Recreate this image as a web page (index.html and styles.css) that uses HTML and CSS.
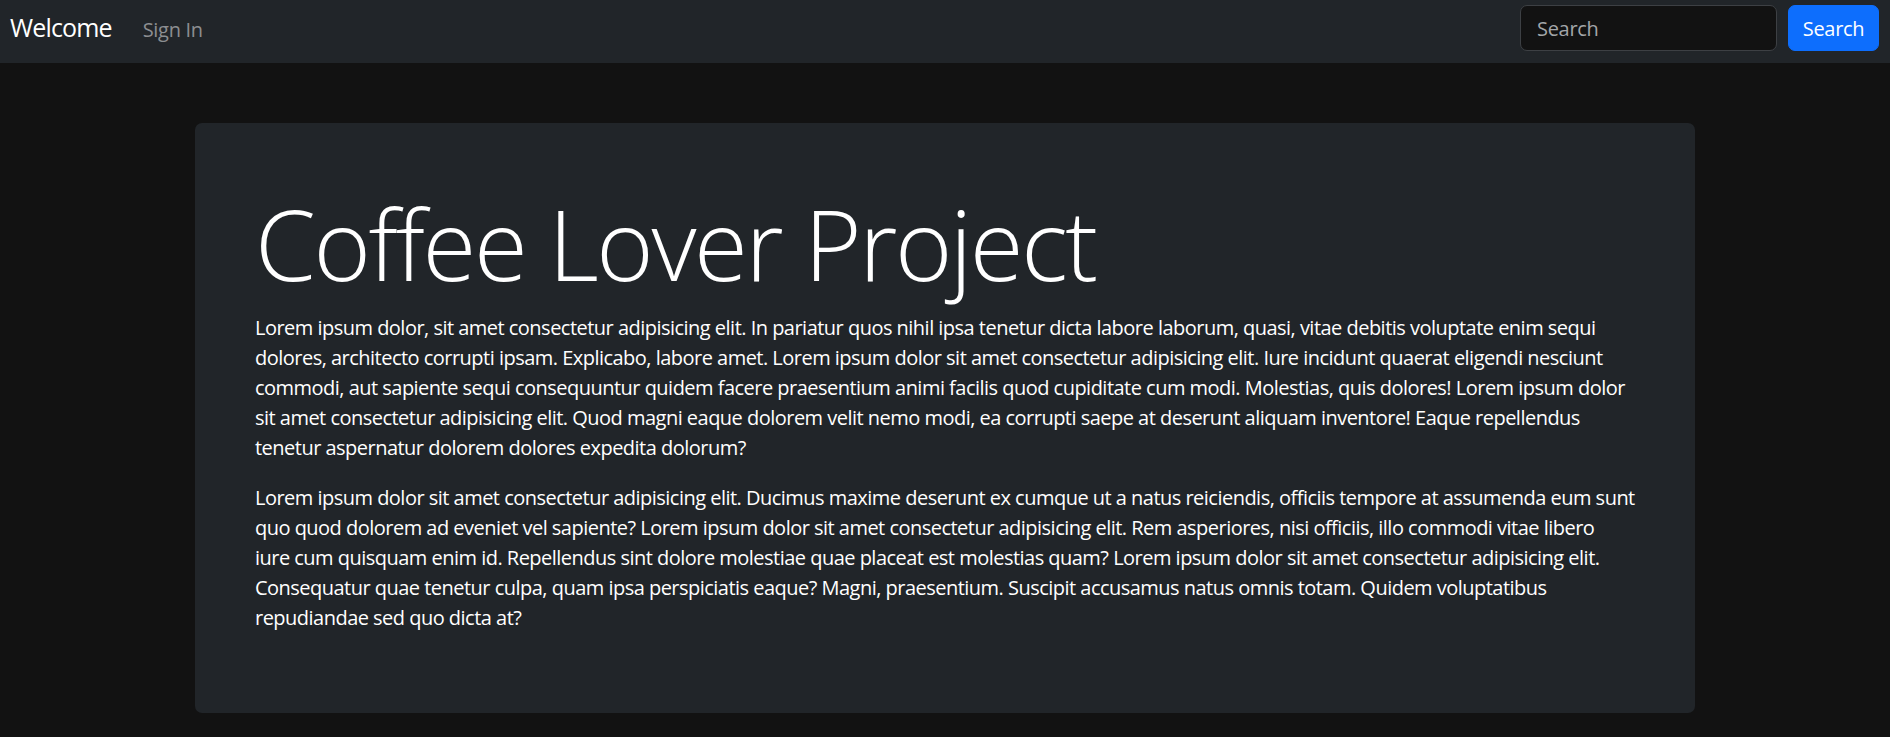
FILE: index.html
```html
<!DOCTYPE html>
<html lang="en">
<head>
<meta charset="utf-8">
<title>Coffee Lover Project</title>
<link rel="stylesheet" href="styles.css">
</head>
<body>
<nav class="navbar">
  <div class="nav-left">
    <a class="brand" href="#">Welcome</a>
    <a class="nav-link" href="#">Sign In</a>
  </div>
  <form class="search" onsubmit="return false">
    <input class="search-input" type="search" placeholder="Search">
    <button class="search-btn" type="submit">Search</button>
  </form>
</nav>
<main class="page">
  <section class="jumbo">
    <h1 class="display">Coffee Lover Project</h1>
    <p class="copy">Lorem ipsum dolor, sit amet consectetur adipisicing elit. In pariatur quos nihil ipsa tenetur dicta labore laborum, quasi, vitae debitis voluptate enim sequi<br>
    dolores, architecto corrupti ipsam. Explicabo, labore amet. Lorem ipsum dolor sit amet consectetur adipisicing elit. Iure incidunt quaerat eligendi nesciunt<br>
    commodi, aut sapiente sequi consequuntur quidem facere praesentium animi facilis quod cupiditate cum modi. Molestias, quis dolores! Lorem ipsum dolor<br>
    sit amet consectetur adipisicing elit. Quod magni eaque dolorem velit nemo modi, ea corrupti saepe at deserunt aliquam inventore! Eaque repellendus<br>
    tenetur aspernatur dolorem dolores expedita dolorum?</p>
    <p class="copy">Lorem ipsum dolor sit amet consectetur adipisicing elit. Ducimus maxime deserunt ex cumque ut a natus reiciendis, officiis tempore at assumenda eum sunt<br>
    quo quod dolorem ad eveniet vel sapiente? Lorem ipsum dolor sit amet consectetur adipisicing elit. Rem asperiores, nisi officiis, illo commodi vitae libero<br>
    iure cum quisquam enim id. Repellendus sint dolore molestiae quae placeat est molestias quam? Lorem ipsum dolor sit amet consectetur adipisicing elit.<br>
    Consequatur quae tenetur culpa, quam ipsa perspiciatis eaque? Magni, praesentium. Suscipit accusamus natus omnis totam. Quidem voluptatibus<br>
    repudiandae sed quo dicta at?</p>
  </section>
</main>
</body>
</html>
```
FILE: styles.css
```css
* { box-sizing: border-box; }

html, body {
  margin: 0;
  background: #121212;
  color: #ffffff;
  font-family: "Open Sans", "Noto Sans", sans-serif;
}

.navbar {
  height: 63px;
  background: #212529;
  display: flex;
  justify-content: space-between;
  align-items: flex-start;
  padding: 0 11px 0 10px;
}

.nav-left {
  display: flex;
  align-items: baseline;
  padding-top: 9px;
}

.brand {
  font-size: 25px;
  line-height: 37px;
  letter-spacing: -0.85px;
  color: #ffffff;
  text-decoration: none;
  margin-right: 31px;
}

.nav-link {
  font-size: 20px;
  line-height: 30px;
  letter-spacing: -0.3px;
  color: #8c8e91;
  text-decoration: none;
}

.search {
  display: flex;
  margin: 5px 0 0;
  gap: 11px;
}

.search-input {
  width: 257px;
  height: 46px;
  background: #121212;
  border: 1px solid #3d4044;
  border-radius: 7px;
  padding: 0 16px;
  color: #ffffff;
  font-family: inherit;
  font-size: 20px;
  letter-spacing: -0.3px;
  outline: none;
}

.search-input::placeholder {
  color: #a3a6a9;
}

.search-btn {
  width: 91px;
  height: 46px;
  background: #0d6efd;
  border: 1px solid #0d6efd;
  border-radius: 7px;
  color: #ffffff;
  font-family: inherit;
  font-size: 20px;
  letter-spacing: -0.3px;
  padding: 0;
}

.page {
  padding-top: 60px;
}

.jumbo {
  width: 1500px;
  margin: 0 auto;
  background: #212529;
  border-radius: 7px;
  padding: 60px 40px 60px 60px;
}

.display {
  font-size: 98px;
  font-weight: 300;
  line-height: 120px;
  letter-spacing: -2.4px;
  margin: 0 0 10px;
  color: #ffffff;
}

.copy {
  font-size: 20px;
  line-height: 30px;
  letter-spacing: -0.52px;
  margin: 0 0 20px;
}
```
